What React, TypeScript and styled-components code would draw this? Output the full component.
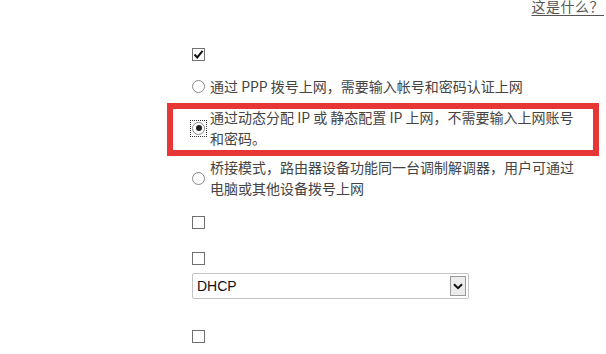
import styled, { createGlobalStyle } from 'styled-components';

const GlobalStyle = createGlobalStyle`
  html, body {
    margin: 0;
    padding: 0;
    background: #ffffff;
    overflow: hidden;
  }
  body {
    font-family: "Noto Sans CJK SC", "Liberation Sans", sans-serif;
    color: #444444;
  }
`

const Page = styled.div`
  width: 606px;
  height: 354px;
  overflow: hidden;
  background: #fff;
`

const TopBar = styled.div`
  display: flex;
  justify-content: flex-end;
  height: 16px;
  padding-right: 2px;
`

const HelpLink = styled.a`
  margin-top: -4px;
  font-size: 14px;
  line-height: 20px;
  letter-spacing: 0.5px;
  color: #555555;
  text-decoration: underline;
  text-underline-offset: 3px;
  cursor: pointer;
`

const Form = styled.div`
  display: flex;
  flex-direction: column;
  align-items: flex-start;
  padding-left: 192px;
`

const Field = styled.div<{ $top: number }>`
  margin-top: ${p => p.$top}px;
  display: flex;
`

const Option = styled.label<{ $top: number }>`
  position: relative;
  margin-top: ${p => p.$top}px;
  display: flex;
  align-items: center;
  gap: 5px;
  font-size: 14px;
  line-height: 21px;
  color: #444444;
`

const OptionText = styled.span`
  width: 375px;
`

const Highlight = styled.span`
  position: absolute;
  top: -4px;
  bottom: -7px;
  left: -25px;
  right: -14px;
  border: 6px solid #e63636;
  pointer-events: none;
`

const Box = styled.span`
  width: 13px;
  height: 13px;
  box-sizing: border-box;
  border: 1px solid #707070;
  background: #fff;
  display: flex;
  align-items: center;
  justify-content: center;
`

const Radio = styled.span<{ $checked?: boolean }>`
  position: relative;
  flex: none;
  width: 13px;
  height: 13px;
  box-sizing: border-box;
  border-radius: 50%;
  border: 1px solid #8a8a8a;
  background: #fff;
  display: flex;
  align-items: center;
  justify-content: center;

  &::before {
    content: '';
    display: ${p => p.$checked ? 'block' : 'none'};
    position: absolute;
    top: -3px;
    left: -3px;
    width: 17px;
    height: 17px;
    box-sizing: border-box;
    border: 1px dotted #333;
  }

  &::after {
    content: '';
    display: ${p => p.$checked ? 'block' : 'none'};
    width: 6px;
    height: 6px;
    border-radius: 50%;
    background: #1e1e1e;
  }
`

const Select = styled.div`
  width: 277px;
  height: 26px;
  box-sizing: border-box;
  border: 1px solid #c4c4c4;
  border-radius: 2px;
  display: flex;
  align-items: center;
  justify-content: space-between;
  padding: 0 2px 0 4px;
  font-family: "Liberation Sans", Arial, sans-serif;
  font-size: 14px;
  color: #111;
  background: #fff;
`

const SelectButton = styled.span`
  width: 16px;
  height: 20px;
  box-sizing: border-box;
  border: 1px solid #9a9a9a;
  background: #ececec;
  display: flex;
  align-items: center;
  justify-content: center;
`

function Checkbox({ checked }: { checked?: boolean }) {
  return (
    <Box>
      {checked && (
        <svg width="11" height="11" viewBox="0 0 11 11">
          <path d="M1.5 5.5 L4.2 8.4 L9.6 1.8" fill="none" stroke="#111" strokeWidth="2" />
        </svg>
      )}
    </Box>
  )
}

export default function App() {
  return (
    <>
      <GlobalStyle />
      <Page>
        <TopBar>
          <HelpLink>这是什么？</HelpLink>
        </TopBar>

        <Form>
          <Field $top={32}>
            <Checkbox checked />
          </Field>

          <Option $top={15}>
            <Radio />
            <OptionText>通过 PPP 拨号上网，需要输入帐号和密码认证上网</OptionText>
          </Option>

          <Option $top={10}>
            <Radio $checked />
            <OptionText>通过动态分配 IP 或 静态配置 IP 上网，不需要输入上网账号和密码。</OptionText>
            <Highlight />
          </Option>

          <Option $top={8}>
            <Radio />
            <OptionText>桥接模式，路由器设备功能同一台调制解调器，用户可通过电脑或其他设备拨号上网</OptionText>
          </Option>

          <Field $top={17}>
            <Checkbox />
          </Field>

          <Field $top={23}>
            <Checkbox />
          </Field>

          <Field $top={8}>
            <Select>
              <span>DHCP</span>
              <SelectButton>
                <svg width="10" height="7" viewBox="0 0 10 7">
                  <path d="M1 1.2 L5 5.2 L9 1.2" fill="none" stroke="#111" strokeWidth="2" />
                </svg>
              </SelectButton>
            </Select>
          </Field>

          <Field $top={31}>
            <Checkbox />
          </Field>
        </Form>
      </Page>
    </>
  )
}
